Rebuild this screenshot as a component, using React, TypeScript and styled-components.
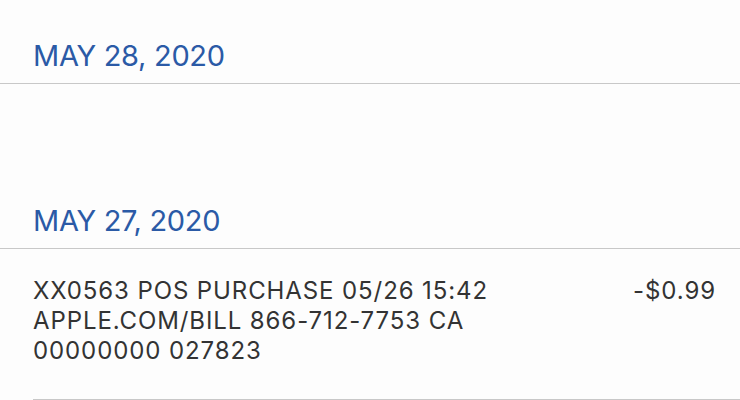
import React from 'react';
import styled, { createGlobalStyle } from 'styled-components';

const GlobalStyle = createGlobalStyle`
  html, body {
    margin: 0;
    padding: 0;
    background: #fdfdfd;
  }
  body {
    font-family: Inter, "Noto Sans", "Liberation Sans", sans-serif;
    -webkit-font-smoothing: antialiased;
  }
`;

const Page = styled.div`
  width: 740px;
  height: 400px;
  overflow: hidden;
  background: #fdfdfd;
`;

const SectionHeader = styled.div`
  height: 84px;
  box-sizing: border-box;
  display: flex;
  align-items: flex-end;
  padding: 0 0 11px 33px;
  border-bottom: 1px solid #c8c8c8;
`;

const HeaderText = styled.span`
  font-size: 29px;
  line-height: 32px;
  color: #2b5aa6;
  letter-spacing: -0.3px;
`;

const EmptyGap = styled.div`
  height: 81px;
`;

const Row = styled.div`
  margin-left: 33px;
  padding: 27px 24px 33px 0;
  display: flex;
  justify-content: space-between;
  align-items: flex-start;
  border-bottom: 1px solid #c8c8c8;
`;

const Description = styled.div`
  font-size: 24px;
  line-height: 30px;
  letter-spacing: 0.9px;
  color: #333333;
  max-width: 500px;
`;

const Amount = styled.div`
  font-size: 24px;
  line-height: 30px;
  letter-spacing: 0.9px;
  color: #333333;
`;

interface Transaction {
  lines: string[];
  amount: string;
}

const may27: Transaction[] = [
  {
    lines: ['XX0563 POS PURCHASE 05/26 15:42', 'APPLE.COM/BILL 866-712-7753 CA', '00000000 027823'],
    amount: '-$0.99',
  },
];

export default function App() {
  return (
    <Page>
      <GlobalStyle />
      <SectionHeader>
        <HeaderText>MAY 28, 2020</HeaderText>
      </SectionHeader>
      <EmptyGap />
      <SectionHeader>
        <HeaderText>MAY 27, 2020</HeaderText>
      </SectionHeader>
      {may27.map((t, i) => (
        <Row key={i}>
          <Description>
            {t.lines.map((l) => (
              <div key={l}>{l}</div>
            ))}
          </Description>
          <Amount>{t.amount}</Amount>
        </Row>
      ))}
    </Page>
  );
}
